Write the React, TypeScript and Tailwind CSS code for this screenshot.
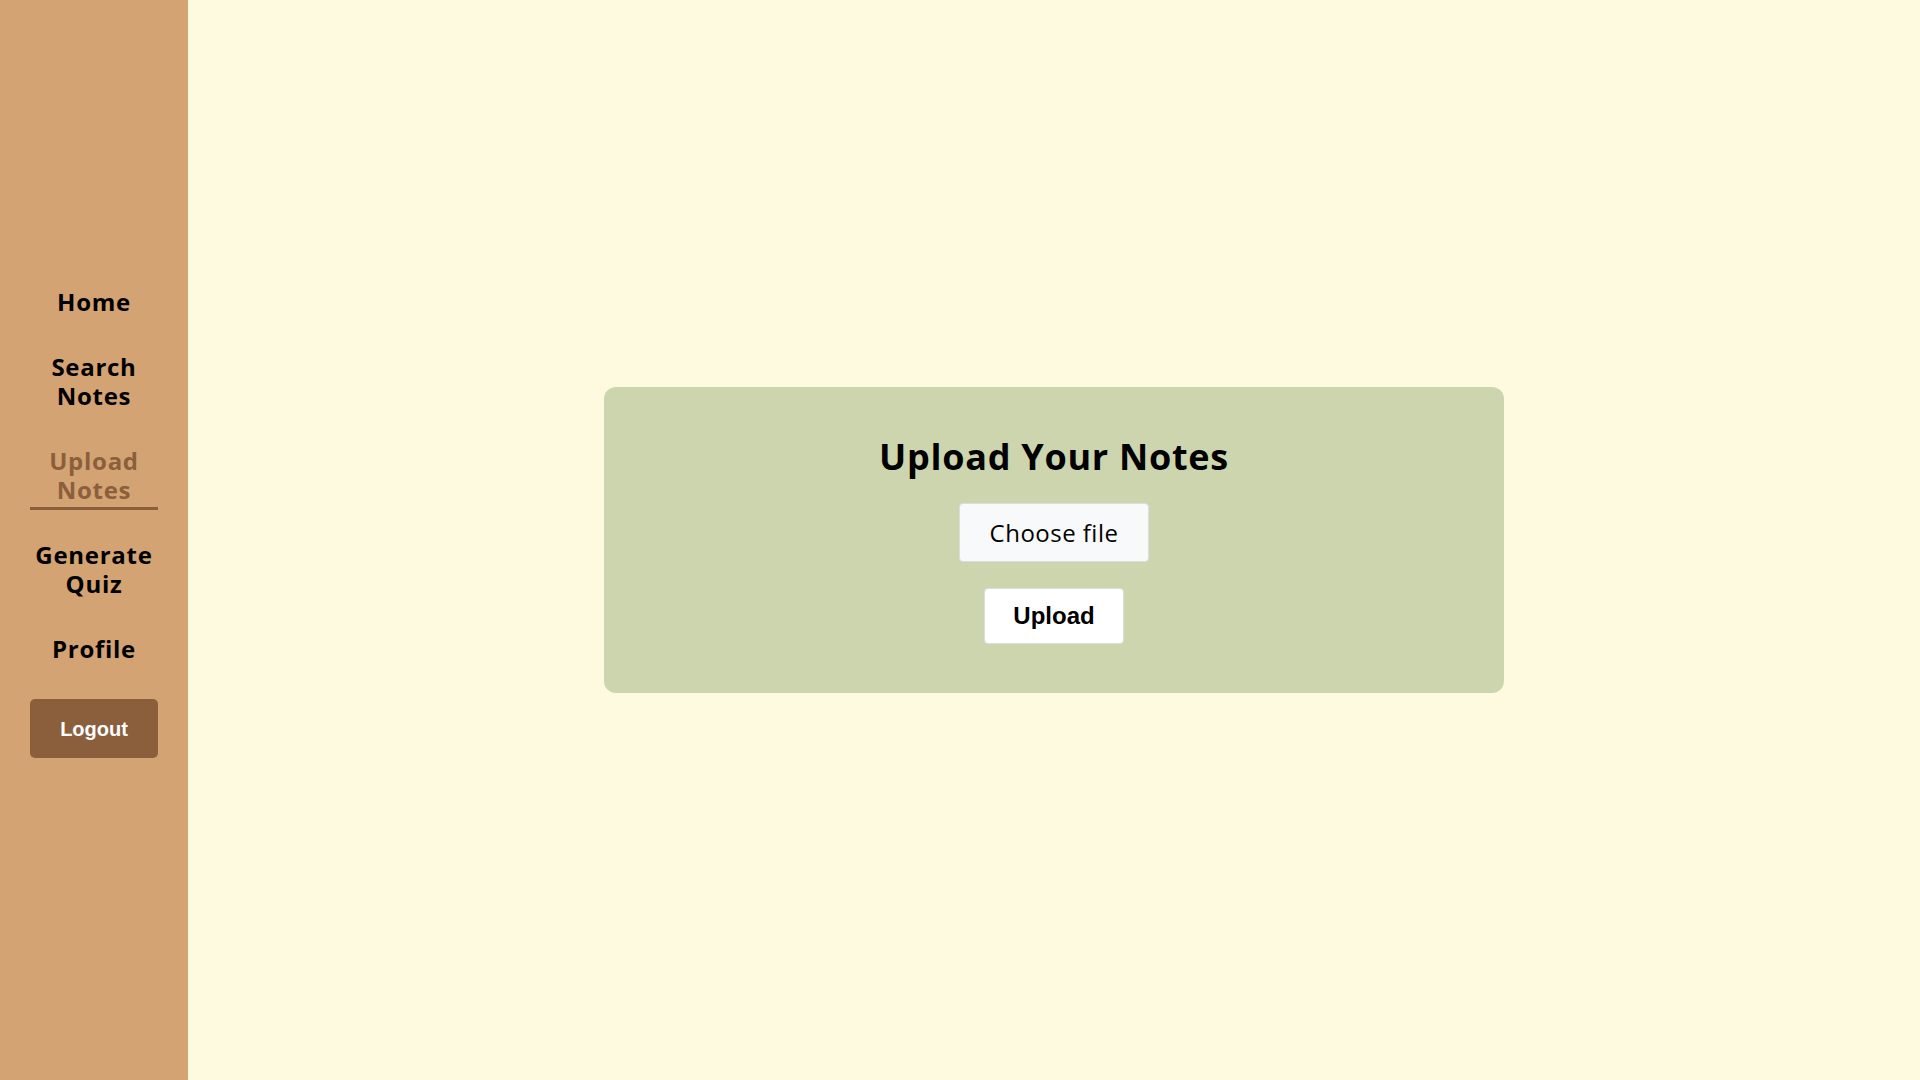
import React from "react";

const navItems = [
  { label: ["Home"], active: false },
  { label: ["Search", "Notes"], active: false },
  { label: ["Upload", "Notes"], active: true },
  { label: ["Generate", "Quiz"], active: false },
  { label: ["Profile"], active: false },
];

const Sidebar = () => {
  return (
    <aside className="flex h-screen w-[188px] shrink-0 flex-col items-center justify-center bg-[#d4a373] px-[30px] pb-[38px]">
      <nav className="flex w-[128px] flex-col gap-[27px]">
        {navItems.map((item) => (
          <a
            key={item.label.join(" ")}
            href="#"
            className={`block whitespace-nowrap border-b-[3px] pb-[3px] pt-[3px] text-center text-[24px] font-bold leading-[29px] tracking-[0.03em] ${
              item.active ? "border-[#8b5e3c] text-[#8b5e3c]" : "border-transparent text-black"
            }`}
          >
            {item.label[0]}
            {item.label[1] && (
              <>
                <br />
                {item.label[1]}
              </>
            )}
          </a>
        ))}
      </nav>
      <button className="mt-[30px] h-[59px] w-[128px] rounded-[5px] bg-[#8b5e3c] font-['Liberation_Sans',Arial,sans-serif] text-[20px] font-bold text-white">
        Logout
      </button>
    </aside>
  );
};

const UploadCard = () => {
  return (
    <section className="flex w-[900px] flex-col items-center rounded-[12px] bg-[#ccd5ae] pb-[49px] pt-[48px]">
      <h2 className="text-[36px] font-bold leading-[44px] tracking-[0.02em] text-black">Upload Your Notes</h2>
      <label className="mt-[24px] flex h-[59px] w-[190px] items-center justify-center rounded-[4px] border border-[#dddddd] bg-[#f8f9fa] text-[24px] tracking-[0.02em] text-black">
        Choose file
        <input type="file" className="hidden" />
      </label>
      <button className="mt-[26px] h-[56px] w-[140px] rounded-[4px] border border-[#dddddd] bg-white font-['Liberation_Sans',Arial,sans-serif] text-[24px] font-bold text-black">
        Upload
      </button>
    </section>
  );
};

export default function App() {
  return (
    <div className="flex h-screen w-full font-['Open_Sans',sans-serif]">
      <Sidebar />
      <main className="flex flex-1 items-center justify-center bg-[#fefae0]">
        <UploadCard />
      </main>
    </div>
  );
}
